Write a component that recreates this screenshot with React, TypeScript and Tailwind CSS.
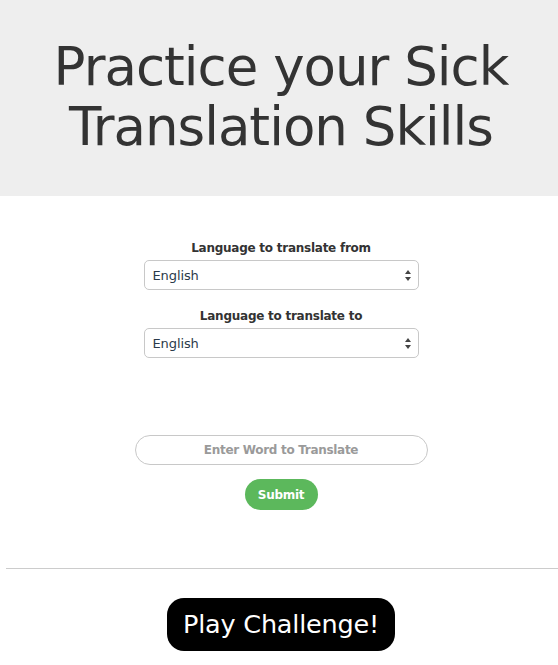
export default function App() {
  return (
    <div className="min-h-[665px] bg-white pl-[4px] font-['DejaVu_Sans',sans-serif] text-[#333]">
      <div className="-ml-[4px] flex h-[196px] items-center justify-center bg-[#eeeeee] pl-[4px] pb-[2px]">
        <h1 className="text-center text-[53px] leading-[60px] font-normal tracking-[-1px] text-[#333]">
          Practice your Sick
          <br />
          Translation Skills
        </h1>
      </div>

      <div className="flex flex-col items-center pt-[43px]">
        <label className="text-[12px] font-bold leading-[18px] tracking-[-0.25px]">Language to translate from</label>
        <div className="relative mt-[3px] h-[30px] w-[275px] rounded-[5px] border border-[#c8c8c8] bg-white">
          <span className="absolute left-[8px] top-[5px] text-[13px] tracking-[-0.1px] text-[#2b3a4a]">English</span>
          <Arrows />
        </div>

        <label className="mt-[17px] text-[12px] font-bold leading-[18px] tracking-[-0.25px]">Language to translate to</label>
        <div className="relative mt-[3px] h-[30px] w-[275px] rounded-[5px] border border-[#c8c8c8] bg-white">
          <span className="absolute left-[8px] top-[5px] text-[13px] tracking-[-0.1px] text-[#2b3a4a]">English</span>
          <Arrows />
        </div>

        <div className="mt-[77px] flex h-[30px] w-[293px] items-center justify-center rounded-full border border-[#c8c8c8]">
          <span className="text-[12px] font-bold tracking-[-0.3px] text-[#9a9a9a]">Enter Word to Translate</span>
        </div>

        <button className="mt-[14px] h-[31px] w-[73px] rounded-full bg-[#5cb85c] text-[12px] font-bold tracking-[-0.3px] text-white">
          Submit
        </button>
      </div>

      <div className="ml-[2px] mt-[58px] border-t border-[#cccccc]" />

      <div className="flex justify-center pt-[29px]">
        <button className="h-[53px] w-[228px] rounded-[17px] bg-black text-[25.5px] tracking-[-0.2px] text-white">
          Play Challenge!
        </button>
      </div>
    </div>
  );
}

function Arrows() {
  return (
    <svg className="absolute right-[7px] top-[9px]" width="6" height="11" viewBox="0 0 6 11">
      <path d="M3 0 L6 4 L0 4 Z" fill="#444" />
      <path d="M0 7 L6 7 L3 11 Z" fill="#444" />
    </svg>
  );
}
